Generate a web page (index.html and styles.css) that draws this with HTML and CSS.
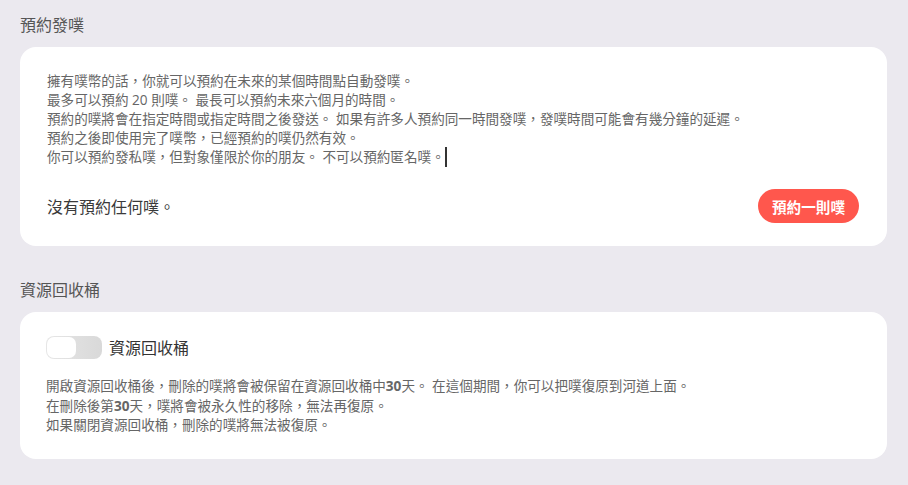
FILE: index.html
```html
<!DOCTYPE html>
<html lang="zh-Hant">
<head>
    <meta charset="UTF-8">
    <meta name="viewport" content="width=device-width, initial-scale=1.0">
    <title>預約發噗</title>
    <link rel="stylesheet" href="styles.css">
</head>
<body>
    <h2 class="section-title">預約發噗</h2>
    <div class="card">
        <div class="info">
            擁有噗幣的話，你就可以預約在未來的某個時間點自動發噗。<br>
            最多可以預約 20 則噗。 最長可以預約未來六個月的時間。<br>
            預約的噗將會在指定時間或指定時間之後發送。 如果有許多人預約同一時間發噗，發噗時間可能會有幾分鐘的延遲。<br>
            預約之後即使用完了噗幣，已經預約的噗仍然有效。<br>
            你可以預約發私噗，但對象僅限於你的朋友。 不可以預約匿名噗。<span class="caret"></span>
        </div>
        <div class="schedule-row">
            <span class="empty">沒有預約任何噗。</span>
            <button class="btn-schedule">預約一則噗</button>
        </div>
    </div>

    <h2 class="section-title">資源回收桶</h2>
    <div class="card card-trash">
        <label class="switch-row">
            <span class="switch"><span class="knob"></span></span>
            <span class="switch-label">資源回收桶</span>
        </label>
        <div class="info">
            開啟資源回收桶後，刪除的噗將會被保留在資源回收桶中<b>30</b>天。 在這個期間，你可以把噗復原到河道上面。<br>
            在刪除後第<b>30</b>天，噗將會被永久性的移除，無法再復原。<br>
            如果關閉資源回收桶，刪除的噗將無法被復原。
        </div>
    </div>
</body>
</html>
```

FILE: styles.css
```css
body {
    margin: 0;
    padding: 0 21px 0 20px;
    background-color: #ebe9ef;
    font-family: "Open Sans", "Noto Sans CJK TC", sans-serif;
    color: #555;
}
.section-title {
    margin: 14px 0 11px;
    font-size: 16px;
    font-weight: normal;
    line-height: 22px;
    color: #555;
}
.card + .section-title {
    margin-top: 33px;
}
.card {
    background-color: #fff;
    border-radius: 16px;
    padding: 24px 28px 23px 27px;
}
.info {
    font-size: 13.6px;
    line-height: 19px;
    color: #666;
}
.info b {
    font-weight: bold;
}
.caret {
    display: inline-block;
    width: 2px;
    height: 20px;
    background-color: #333;
    vertical-align: -5px;
}
.schedule-row {
    display: flex;
    align-items: center;
    justify-content: space-between;
    margin-top: 22px;
}
.empty {
    font-size: 16px;
    color: #3a3a3a;
}
.btn-schedule {
    height: 34px;
    padding: 0 14px;
    border: none;
    border-radius: 17px;
    background-color: #ff574d;
    color: #fff;
    font-family: inherit;
    font-size: 14.6px;
    font-weight: bold;
}
.card-trash {
    padding: 23px 28px 24px 26px;
}
.card-trash .info {
    line-height: 19.5px;
}
.switch-row {
    display: flex;
    align-items: center;
    gap: 7px;
    margin-bottom: 17px;
}
.switch {
    display: flex;
    align-items: center;
    width: 56px;
    height: 23px;
    padding: 0 1px;
    box-sizing: border-box;
    border-radius: 8px;
    background: linear-gradient(to right, #e6e6e6, #d9d9d9);
}
.knob {
    width: 29px;
    height: 21px;
    border-radius: 7px;
    background-color: #fff;
}
.switch-label {
    font-size: 16px;
    color: #333;
}
```
